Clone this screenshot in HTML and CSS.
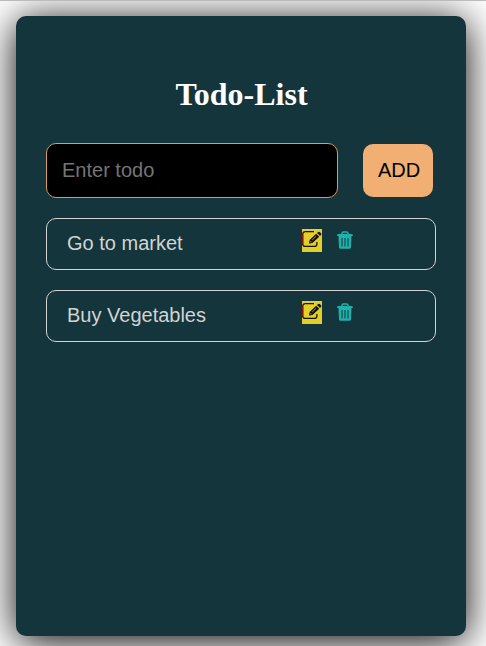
FILE: index.html
```html
<!DOCTYPE html>
<html lang="en">
<head>
<meta charset="utf-8">
<title>Todo-List</title>
<link rel="stylesheet" href="styles.css">
</head>
<body>
<svg class="sprite" aria-hidden="true">
  <symbol id="edit" viewBox="0 0 20 20">
    <path d="M12 2.7H3.4Q.8 2.7 .8 5.2V14.9Q.8 17.4 3.4 17.4H12.3Q14.9 17.4 14.9 14.9V13" fill="none" stroke="#16130a" stroke-width="1.3"/>
    <path d="M.5 5V15" stroke="#8d1409" stroke-width="1"/>
    <path d="M7 14.6 7.6 11.1 14.2 4.8 17.2 7.7 10.5 14Z" fill="#16130a"/>
    <path d="M15 4.1 16.1 3Q16.9 2.3 17.7 3L19 4.2Q19.8 5 19.1 5.8L18 7Z" fill="#16130a"/>
    <path d="M10.2 11 14.1 7.2M8.4 12 9.7 13.3" stroke="#e3cf2a" stroke-width=".7"/>
  </symbol>
  <symbol id="trash" viewBox="0 0 16 18">
    <path d="M4.9 3.2V2.5Q4.9 1 6.4 1H9.6Q11.1 1 11.1 2.5V3.2" fill="none" stroke="currentColor" stroke-width="1.4"/>
    <path fill="currentColor" fill-rule="evenodd" d="M1.2 2.9H14.8Q15.8 2.9 15.8 3.9V5.1H.2V3.9Q.2 2.9 1.2 2.9ZM1.5 5.1H14.5L14 16.3Q13.9 17.8 12.4 17.8H3.6Q2.1 17.8 2 16.3ZM4.5 7V15.6H5.5V7ZM7.5 7V15.6H8.5V7ZM10.5 7V15.6H11.5V7Z"/>
  </symbol>
</svg>
<main class="card">
  <h1 class="title">Todo-List</h1>
  <form class="entry">
    <input class="entry-input" type="text" placeholder="Enter todo">
    <button class="entry-add" type="button">ADD</button>
  </form>
  <ul class="todos">
    <li class="todo">
      <span class="todo-text">Go to market</span>
      <svg class="edit"><use href="#edit"/></svg>
      <svg class="trash"><use href="#trash"/></svg>
    </li>
    <li class="todo">
      <span class="todo-text">Buy Vegetables</span>
      <svg class="edit"><use href="#edit"/></svg>
      <svg class="trash"><use href="#trash"/></svg>
    </li>
  </ul>
</main>
</body>
</html>
```
FILE: styles.css
```css
* { box-sizing: border-box; }

html { height: 100%; overflow: hidden; background: #fff; }

body {
  height: 646px;
  margin: 0;
  padding: 15px 16px 10px;
  border-top: 1px solid #bbb;
  overflow: hidden;
  font-family: "Liberation Sans", Arial, sans-serif;
}

.sprite { display: none; }

.card {
  width: 450px;
  height: 620px;
  padding: 60px 30px 0;
  border-radius: 10px;
  background: #13353b;
  box-shadow: 0 5px 40px #000;
}

.title {
  margin: 0 0 30px;
  padding-left: 1px;
  color: #fff;
  font: bold 32px/37px "Liberation Serif", "Times New Roman", serif;
  text-align: center;
}

.entry {
  display: flex;
  align-items: center;
  gap: 25px;
  margin: 0 0 20px;
}

.entry-input {
  width: 292px;
  height: 55px;
  padding: 0 15px;
  border: 1px solid #dc9a5e;
  border-radius: 10px;
  background: #000;
  color: #ccc;
  font: 20px "Liberation Sans", Arial, sans-serif;
}

.entry-input::placeholder { color: #757575; }

.entry-add {
  width: 70px;
  height: 53px;
  padding: 0 0 0 2px;
  border: 0;
  border-radius: 10px;
  background: #f1af73;
  color: #000;
  font: 20px "Liberation Sans", Arial, sans-serif;
}

.todos {
  display: grid;
  gap: 20px;
  margin: 0;
  padding: 0;
  list-style: none;
}

.todo {
  display: flex;
  align-items: flex-start;
  width: 390px;
  height: 52px;
  padding: 10px 20px;
  border: 1px solid #d3d3d3;
  border-radius: 10px;
  color: #d3d3d3;
  font-size: 20px;
}

.todo-text { width: 235px; line-height: 28px; }

.edit {
  width: 20px;
  height: 23px;
  padding-bottom: 3px;
  background: #e3cf2a;
}

.trash {
  width: 16px;
  height: 18px;
  margin: 2px 0 0 15px;
  color: lightseagreen;
}
```
